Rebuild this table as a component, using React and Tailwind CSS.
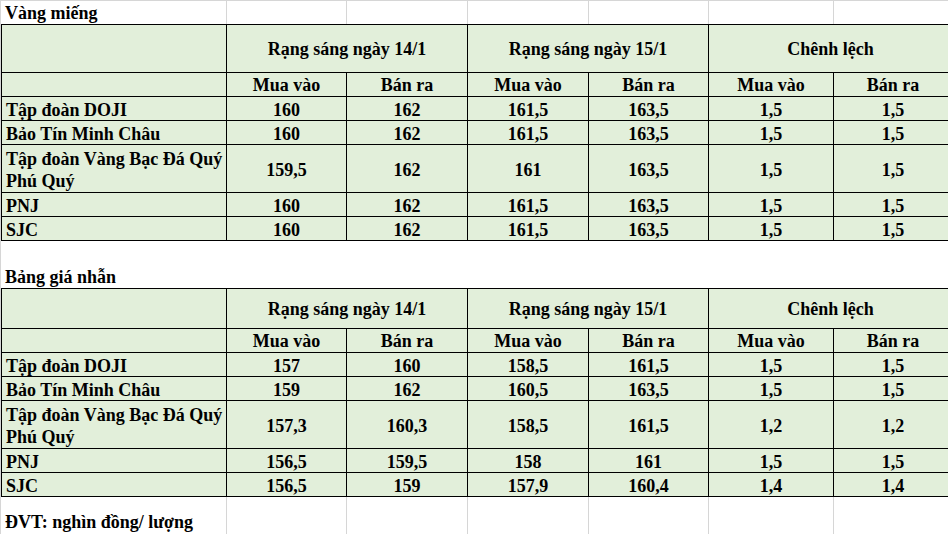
import React from "react";

const cols = [225, 120, 121, 121, 120, 125, 119];

const vangMieng = [
  { name: "Tập đoàn DOJI", v: ["160", "162", "161,5", "163,5", "1,5", "1,5"] },
  { name: "Bảo Tín Minh Châu", v: ["160", "162", "161,5", "163,5", "1,5", "1,5"] },
  { name: "Tập đoàn Vàng Bạc Đá Quý Phú Quý", tall: true, v: ["159,5", "162", "161", "163,5", "1,5", "1,5"] },
  { name: "PNJ", v: ["160", "162", "161,5", "163,5", "1,5", "1,5"] },
  { name: "SJC", v: ["160", "162", "161,5", "163,5", "1,5", "1,5"] },
];

const nhan = [
  { name: "Tập đoàn DOJI", v: ["157", "160", "158,5", "161,5", "1,5", "1,5"] },
  { name: "Bảo Tín Minh Châu", v: ["159", "162", "160,5", "163,5", "1,5", "1,5"] },
  { name: "Tập đoàn Vàng Bạc Đá Quý Phú Quý", tall: true, v: ["157,3", "160,3", "158,5", "161,5", "1,2", "1,2"] },
  { name: "PNJ", v: ["156,5", "159,5", "158", "161", "1,5", "1,5"] },
  { name: "SJC", v: ["156,5", "159", "157,9", "160,4", "1,4", "1,4"] },
];

// plain white sheet row with grey gridlines
const SheetRow = ({ label, className, pad }) => (
  <div className={`flex ${className}`}>
    {cols.map((w, i) => (
      <div
        key={i}
        style={{ width: w }}
        className={`shrink-0 flex items-end ${pad} ${i > 0 ? "border-l border-[#d6d6d6]" : ""}`}
      >
        {i === 0 && <span className="pl-[4px] whitespace-nowrap leading-[22px]">{label}</span>}
      </div>
    ))}
  </div>
);

const PriceTable = ({ rows, headH }) => {
  const head = "border border-black text-center align-middle p-0 pt-[2px] leading-[21px]";
  const cell = "border border-black text-center align-middle p-0 pt-[3px] leading-[20px]";
  const total = cols.reduce((a, b) => a + b, 0);
  return (
    <table className="table-fixed border-collapse bg-[#e2efda]" style={{ width: total }}>
      <colgroup>
        {cols.map((w, i) => (
          <col key={i} style={{ width: w }} />
        ))}
      </colgroup>
      <tbody>
        <tr style={{ height: headH }}>
          <td className={head}></td>
          <td className={head} colSpan={2}>Rạng sáng ngày 14/1</td>
          <td className={head} colSpan={2}>Rạng sáng ngày 15/1</td>
          <td className={head} colSpan={2}>Chênh lệch</td>
        </tr>
        <tr className="h-[24px]">
          <td className={head}></td>
          {["Mua vào", "Bán ra", "Mua vào", "Bán ra", "Mua vào", "Bán ra"].map((t, i) => (
            <td key={i} className={head}>{t}</td>
          ))}
        </tr>
        {rows.map((r) => (
          <tr key={r.name} className={r.tall ? "h-[48px]" : "h-[24px]"}>
            <td
              className={`border border-black text-left align-middle p-0 pt-[3px] pl-[4px] ${
                r.tall ? "leading-[22px]" : "leading-[20px]"
              }`}
            >
              {r.name}
            </td>
            {r.v.map((t, i) => (
              <td key={i} className={cell}>{t}</td>
            ))}
          </tr>
        ))}
      </tbody>
    </table>
  );
};

export default function App() {
  return (
    <div className="w-[948px] h-[534px] overflow-hidden bg-white text-black font-bold text-[18px] leading-[22px] font-['Liberation_Serif','Times_New_Roman',serif] border-t border-l border-[#d6d6d6]">
      <SheetRow label="Vàng miếng" className="h-[23px]" pad="pb-0" />
      <PriceTable rows={vangMieng} headH={48} />
      <div className="h-[47px] flex items-end pl-[4px] pb-0">Bảng giá nhẫn</div>
      <PriceTable rows={nhan} headH={40} />
      <SheetRow label="ĐVT: nghìn đồng/ lượng" className="h-[39px]" pad="pb-[3px]" />
    </div>
  );
}
